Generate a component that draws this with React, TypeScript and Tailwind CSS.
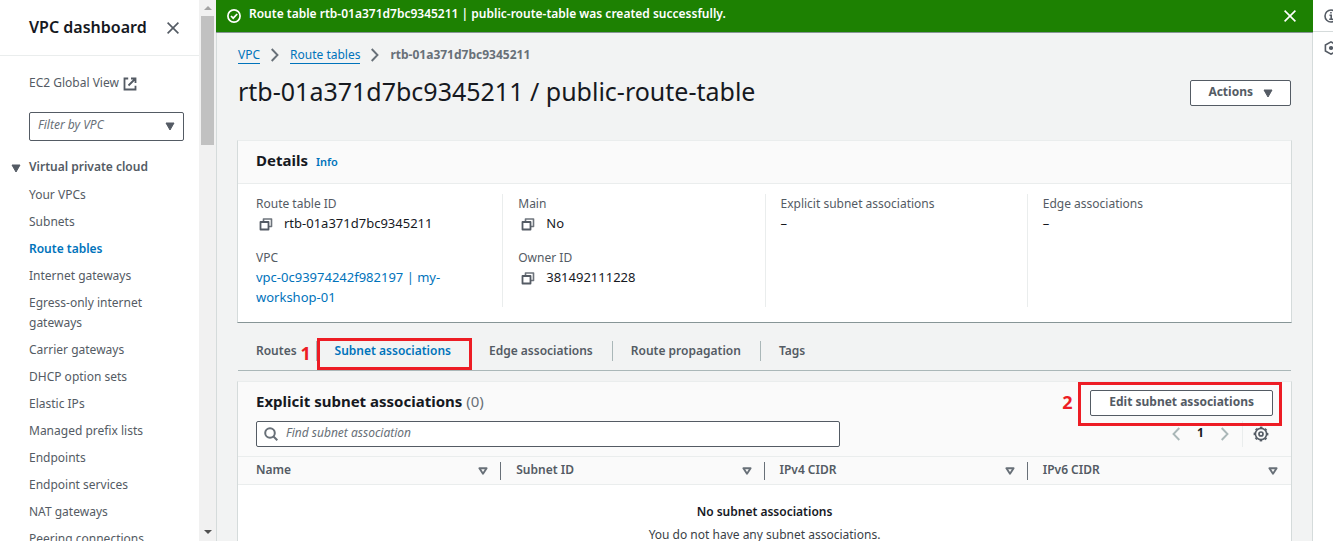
import React from "react";

const navItems = [
  "Your VPCs",
  "Subnets",
  "Route tables",
  "Internet gateways",
  "Egress-only internet gateways",
  "Carrier gateways",
  "DHCP option sets",
  "Elastic IPs",
  "Managed prefix lists",
  "Endpoints",
  "Endpoint services",
  "NAT gateways",
  "Peering connections",
];

const columns = ["Name", "Subnet ID", "IPv4 CIDR", "IPv6 CIDR"];

function CloseIcon({ className }: { className: string }) {
  return (
    <svg viewBox="0 0 12 12" className={className} fill="none" stroke="currentColor" strokeWidth="1.6" aria-hidden="true">
      <path d="M0.6 0.6L11.4 11.4M11.4 0.6L0.6 11.4" />
    </svg>
  );
}

function CaretDown({ className }: { className: string }) {
  return (
    <svg viewBox="0 0 10 9" className={className} fill="currentColor" stroke="currentColor" strokeLinejoin="round" aria-hidden="true">
      <path d="M1 1h8L5 8z" />
    </svg>
  );
}

function Chevron({ className, left = false }: { className: string; left?: boolean }) {
  return (
    <svg viewBox="0 0 8 14" className={className} fill="none" stroke="currentColor" strokeWidth="1.9" aria-hidden="true">
      <path d={left ? "M7.300 1L1.500 7L7.300 13" : "M0.700 1L6.500 7L0.700 13"} />
    </svg>
  );
}

function ExternalIcon() {
  return (
    <svg viewBox="0 0 14 14" className="mt-[2px] size-[14px]" fill="none" stroke="currentColor" strokeWidth="1.8" aria-hidden="true">
      <path d="M5.200 1.500H1.500v11h11V8.800M8 1.500h4.500V6M12.500 1.500L5.500 8.500" />
    </svg>
  );
}

function CopyButton({ label }: { label: string }) {
  return (
    <button type="button" aria-label={label} className="text-[#545b64]">
      <svg viewBox="0 0 14 14" className="mt-1 size-[14px]" fill="none" stroke="currentColor" strokeWidth="1.8" strokeLinejoin="round" aria-hidden="true">
        <path d="M1.500 5h8v7.500h-8z" />
        <path d="M4.500 4.500V2h8v7.500H10" strokeWidth="1.600" opacity="0.85" />
      </svg>
    </button>
  );
}

function SuccessIcon() {
  return (
    <svg viewBox="0 0 14 14" className="size-[14px] shrink-0" fill="none" stroke="currentColor" strokeWidth="1.7" aria-hidden="true">
      <circle cx="7" cy="7" r="6.100" />
      <path d="M4 7l2.200 2.200L10.200 5" />
    </svg>
  );
}

function SearchIcon() {
  return (
    <svg viewBox="0 0 14 14" className="size-[14px] shrink-0 text-[#687078]" fill="none" stroke="currentColor" strokeWidth="2" aria-hidden="true">
      <circle cx="6" cy="6" r="4.800" />
      <path d="M9.500 9.500L13.300 13.300" />
    </svg>
  );
}

function GearIcon() {
  return (
    <svg viewBox="0 0 16 16" className="size-4" fill="none" stroke="currentColor" aria-hidden="true">
      <circle cx="8" cy="8" r="5.600" strokeWidth="1.600" />
      <circle cx="8" cy="8" r="6.700" strokeWidth="1.400" strokeDasharray="2.600 2.662" strokeDashoffset="1.300" />
      <circle cx="8" cy="8" r="2" strokeWidth="1.700" />
    </svg>
  );
}

function Field({ label, children }: { label: string; children: React.ReactNode }) {
  return (
    <div>
      <dt className="leading-[19px] text-[#545b64]">{label}</dt>
      <dd className="text-[13px] leading-5 text-[#16191f]">{children}</dd>
    </div>
  );
}

function Copyable({ label, value }: { label: string; value: string }) {
  return (
    <div className="flex items-start gap-[11px] pl-[3px]">
      <CopyButton label={label} />
      <span>{value}</span>
    </div>
  );
}

function Sidebar() {
  return (
    <aside className="flex w-54 shrink-0">
      <div className="min-w-0 flex-1 overflow-hidden">
        <div className="flex h-14 items-center justify-between border-b border-[#eaeded] pr-5 pl-[29px]">
          <h2 className="pb-[2px] text-base font-semibold text-[#16191f]">VPC dashboard</h2>
          <button type="button" aria-label="Close navigation" className="text-[#545b64]">
            <CloseIcon className="size-3" />
          </button>
        </div>
        <div className="pr-[15px] pl-[29px]">
          <a href="#global" className="mt-[17px] flex items-center gap-1 leading-5 whitespace-nowrap">
            EC2 Global View <ExternalIcon />
          </a>
          <button type="button" className="mt-[19px] flex h-[29px] w-full items-center justify-between rounded-xs border border-[#545b64] bg-white px-2 text-[#687078] italic">
            <span className="pb-1">Filter by VPC</span>
            <CaretDown className="h-[9px] w-[10px] text-[#545b64]" />
          </button>
        </div>
        <nav className="mt-4 pr-10" aria-label="Virtual private cloud">
          <button type="button" className="flex items-center gap-2 pl-[11px] leading-5 font-semibold whitespace-nowrap">
            <CaretDown className="mt-[2px] h-[9px] w-[10px]" />
            Virtual private cloud
          </button>
          <ul className="mt-2 flex flex-col gap-[7px] pl-[29px]">
            {navItems.map((item) => (
              <li key={item} className="leading-5">
                <a href="#nav" className={item === "Route tables" ? "font-semibold text-[#0073bb]" : ""}>
                  {item}
                </a>
              </li>
            ))}
          </ul>
        </nav>
      </div>
      <div className="flex w-[17px] shrink-0 flex-col items-center justify-between bg-[#f1f1f1]" aria-hidden="true">
        <div className="flex flex-col items-center">
          <svg viewBox="0 0 8 4" className="my-[6px] h-1 w-2 text-[#a3a3a3]" fill="currentColor">
            <path d="M4 0l4 4H0z" />
          </svg>
          <div className="h-[129px] w-[13px] bg-[#c1c1c1]" />
        </div>
        <svg viewBox="0 0 8 4" className="mb-[7px] h-1 w-2 text-[#505050]" fill="currentColor">
          <path d="M0 0h8L4 4z" />
        </svg>
      </div>
    </aside>
  );
}

function Details() {
  const column = "-ml-4 flex flex-col gap-[15px] border-l border-[#eaeded] pl-[15px]";
  return (
    <section className="-mx-px mt-8 border border-t-[#eaeded] border-r-[#d5dbdb] border-b-[#879596] border-l-[#d5dbdb] bg-white">
      <div className="flex h-[43px] items-center gap-2 border-b border-[#eaeded] bg-[#fafafa] px-[18px] pb-1">
        <h2 className="text-[15px] font-bold text-[#16191f]">Details</h2>
        <a href="#info" className="mt-1 text-[11px] font-semibold text-[#0073bb]">Info</a>
      </div>
      <dl className="mx-[18px] mt-[10px] mb-[15px] grid min-h-[113px] grid-cols-4 gap-8">
        <div className="flex flex-col gap-[15px]">
          <Field label="Route table ID">
            <Copyable label="Copy route table ID" value="rtb-01a371d7bc9345211" />
          </Field>
          <Field label="VPC">
            <a href="#vpc" className="text-[#0073bb]">vpc-0c93974242f982197 | my-<br />workshop-01</a>
          </Field>
        </div>
        <div className={column}>
          <Field label="Main">
            <Copyable label="Copy main" value="No" />
          </Field>
          <Field label="Owner ID">
            <Copyable label="Copy owner ID" value="381492111228" />
          </Field>
        </div>
        <div className={column}>
          <Field label="Explicit subnet associations">–</Field>
        </div>
        <div className={column}>
          <Field label="Edge associations">–</Field>
        </div>
      </dl>
    </section>
  );
}

function Tabs() {
  const tab = "relative flex items-center border-r border-[#aab7b8] pr-[19px] pl-[18px] leading-5";
  return (
    <div role="tablist" className="mt-[18px] flex border-b border-[#aab7b8] pb-[9px] font-semibold text-[#545b64]">
      <button type="button" role="tab" className={tab}>
        Routes
      </button>
      <button type="button" role="tab" aria-selected="true" className={tab + " text-[#0073bb]"}>
        Subnet associations
        <span className="absolute -top-[3px] -right-[2px] -bottom-[9px] left-0 border-3 border-[#ed1c24]" />
        <span className="absolute top-[2px] -left-4 text-lg leading-5 font-bold text-[#ed1c24]">1</span>
      </button>
      <button type="button" role="tab" className={tab}>
        Edge associations
      </button>
      <button type="button" role="tab" className={tab}>
        Route propagation
      </button>
      <button type="button" role="tab" className="px-[18px] leading-5">
        Tags
      </button>
    </div>
  );
}

function Associations() {
  return (
    <section className="-mx-px mt-[10px] flex-1 border-x border-t border-x-[#d5dbdb] border-t-[#eaeded] bg-white">
      <div className="bg-[#fafafa] px-[18px] pt-2 pb-[9px]">
        <div className="flex h-[26px] items-center justify-between">
          <h2 className="pb-1 text-[15px] font-bold text-[#16191f]">
            Explicit subnet associations <span className="font-normal text-[#687078]">(0)</span>
          </h2>
          <div className="relative">
            <button type="button" className="h-[26px] rounded-xs border border-[#545b64] bg-white px-[18px] pb-[2px] font-bold">
              Edit subnet associations
            </button>
            <span className="pointer-events-none absolute -top-2 -right-[9px] -bottom-[10px] -left-3 border-3 border-[#ed1c24]" />
            <span className="absolute top-[2px] -left-7 text-lg leading-5 font-bold text-[#ed1c24]">2</span>
          </div>
        </div>
        <div className="mt-[5px] flex items-center justify-between">
          <label className="flex h-[26px] w-[57.4%] items-center gap-2 rounded-xs border border-[#545b64] bg-white px-[7px]">
            <SearchIcon />
            <input
              type="text"
              aria-label="Find subnet association"
              placeholder="Find subnet association"
              className="min-w-0 flex-1 bg-transparent pb-[2px] italic outline-none placeholder:text-[#687078]"
            />
          </label>
          <div className="flex h-[26px] items-center">
            <button type="button" aria-label="Previous page" className="text-[#aab7b8]">
              <Chevron left className="h-[14px] w-2" />
            </button>
            <span className="w-[41px] pb-[2px] text-center font-bold text-[#16191f]">1</span>
            <button type="button" aria-label="Next page" className="text-[#aab7b8]">
              <Chevron className="h-[14px] w-2" />
            </button>
            <button type="button" aria-label="Preferences" className="ml-[13px] flex h-[26px] items-center border-l border-[#eaeded] pr-1 pl-[10px]">
              <GearIcon />
            </button>
          </div>
        </div>
      </div>
      <table className="w-full table-fixed border-t border-[#eaeded]">
        <thead className="bg-[#fafafa]">
          <tr className="border-b border-[#eaeded]">
            {columns.map((name, i) => (
              <th key={name} className="h-7 p-0 text-left font-semibold">
                <div
                  className={
                    i < 3
                      ? "flex h-[18px] items-center justify-between border-r border-[#687078] pr-3" + (i === 0 ? " pl-[18px]" : " pl-[15px]")
                      : "flex h-[18px] items-center justify-between pr-[13px] pl-[15px]"
                  }
                >
                  <span className="pb-[2px]">{name}</span>
                  <svg viewBox="0 0 10 8" className="h-2 w-[10px] text-[#687078]" fill="none" stroke="currentColor" strokeWidth="1.900" strokeLinejoin="round" aria-hidden="true">
                    <path d="M1.400 1.200h7.200L5 6.800z" />
                  </svg>
                </div>
              </th>
            ))}
          </tr>
        </thead>
        <tbody>
          <tr>
            <td colSpan={4} className="pt-[17px] text-center text-[#16191f]">
              <p className="leading-5 font-semibold">No subnet associations</p>
              <p className="mt-[3px] leading-5 text-[#3a3f47]">You do not have any subnet associations.</p>
            </td>
          </tr>
        </tbody>
      </table>
    </section>
  );
}

export default function App() {
  return (
    <div className="flex h-screen overflow-hidden bg-white font-['Noto_Sans',sans-serif] text-[12px] text-[#545b64]">
      <Sidebar />
      <main className="flex min-w-0 flex-1 flex-col border-x border-[#d5dbdb] bg-[#f2f3f3]">
        <div role="status" className="-mx-px flex h-[33px] shrink-0 items-center gap-2 border-b border-[#879596] bg-[#1d8102] pr-[17px] pl-[11px] font-semibold text-white">
          <SuccessIcon />
          <p className="min-w-0 flex-1 truncate pb-1">Route table rtb-01a371d7bc9345211 | public-route-table was created successfully.</p>
          <button type="button" aria-label="Dismiss">
            <CloseIcon className="size-3" />
          </button>
        </div>
        <div className="flex min-h-0 flex-1 flex-col px-[21px] pt-3">
          <nav aria-label="Breadcrumb" className="flex items-center gap-[11px] leading-5">
            <a href="#vpc" className="border-b border-[#0073bb] leading-4 text-[#0073bb]">VPC</a>
            <Chevron className="h-[14px] w-2 text-[#687078]" />
            <a href="#tables" className="border-b border-[#0073bb] leading-4 text-[#0073bb]">Route tables</a>
            <Chevron className="h-[14px] w-2 text-[#687078]" />
            <span className="font-bold text-[#687078]">rtb-01a371d7bc9345211</span>
          </nav>
          <div className="mt-[11px] flex h-8 items-center justify-between">
            <h1 className="pb-[2px] text-[25px] leading-8 text-[#16191f]">rtb-01a371d7bc9345211 / public-route-table</h1>
            <button type="button" className="mt-[2px] flex h-[26px] items-center gap-[10px] rounded-xs border border-[#545b64] bg-white px-[17px] font-bold">
              <span className="pb-[2px]">Actions</span>
              <CaretDown className="h-[9px] w-[10px]" />
            </button>
          </div>
          <Details />
          <Tabs />
          <Associations />
        </div>
      </main>
      <aside className="w-5 shrink-0 overflow-hidden text-[#545b64]">
        <button type="button" aria-label="Info panel" className="flex h-8 w-9 items-center border-b border-[#d5dbdb] pl-[11px]">
          <svg viewBox="0 0 14 14" className="size-[14px]" fill="none" stroke="currentColor" strokeWidth="1.600" aria-hidden="true">
            <circle cx="7" cy="7" r="6" />
            <path d="M5.500 6.300H7.200V10M5.200 10.200h3.800M6.200 3.800h1.500" />
          </svg>
        </button>
        <button type="button" aria-label="Tools panel" className="flex h-8 w-9 items-center pl-[11px]">
          <svg viewBox="0 0 14 14" className="size-[14px]" fill="none" stroke="currentColor" strokeWidth="1.600" aria-hidden="true">
            <path d="M7 0.900L12.600 4v6L7 13.100L1.400 10V4z" />
            <circle cx="7" cy="7" r="1.300" fill="currentColor" />
          </svg>
        </button>
      </aside>
    </div>
  );
}
